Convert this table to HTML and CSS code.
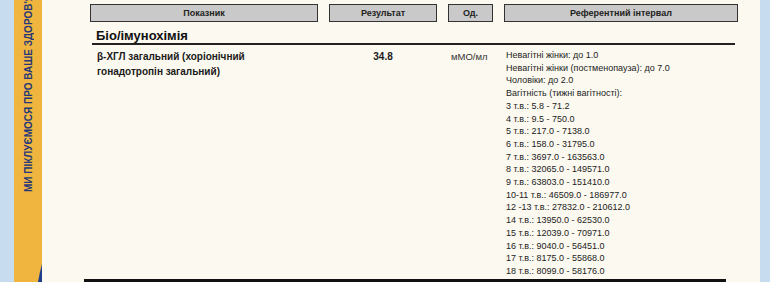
FILE: index.html
```html
<!DOCTYPE html>
<html lang="uk">
<head>
<meta charset="utf-8">
<title>Результати аналізів</title>
<link rel="stylesheet" href="styles.css">
</head>
<body>
<div class="page">
  <div class="edge-left"></div>
  <div class="brand-strip">
    <div class="slogan">МИ ПІКЛУЄМОСЯ ПРО ВАШЕ ЗДОРОВ'Я</div>
    <svg class="swoosh" width="28" height="24" viewBox="0 0 28 24"><path d="M28 6 Q 25.5 15 24 24 L28 24 Z" fill="#1e3d8c"/></svg>
  </div>
  <main class="sheet">
    <div class="grid head">
      <div class="hcell">Показник</div>
      <div class="hcell">Результат</div>
      <div class="hcell">Од.</div>
      <div class="hcell">Референтний інтервал</div>
    </div>
    <div class="section">Біо/імунохімія</div>
    <div class="grid row">
      <div class="name">β-ХГЛ загальний (хоріонічний гонадотропін загальний)</div>
      <div class="result">34.8</div>
      <div class="unit">мМО/мл</div>
      <div class="ref">
        <div>Невагітні жінки: до 1.0</div>
        <div>Невагітні жінки (постменопауза): до 7.0</div>
        <div>Чоловіки: до 2.0</div>
        <div>Вагітність (тижні вагітності):</div>
        <div>3 т.в.: 5.8 - 71.2</div>
        <div>4 т.в.: 9.5 - 750.0</div>
        <div>5 т.в.: 217.0 - 7138.0</div>
        <div>6 т.в.: 158.0 - 31795.0</div>
        <div>7 т.в.: 3697.0 - 163563.0</div>
        <div>8 т.в.: 32065.0 - 149571.0</div>
        <div>9 т.в.: 63803.0 - 151410.0</div>
        <div>10-11 т.в.: 46509.0 - 186977.0</div>
        <div>12 -13 т.в.: 27832.0 - 210612.0</div>
        <div>14 т.в.: 13950.0 - 62530.0</div>
        <div>15 т.в.: 12039.0 - 70971.0</div>
        <div>16 т.в.: 9040.0 - 56451.0</div>
        <div>17 т.в.: 8175.0 - 55868.0</div>
        <div>18 т.в.: 8099.0 - 58176.0</div>
      </div>
    </div>
    <div class="footer-bar"></div>
  </main>
  <div class="edge-right"></div>
</div>
</body>
</html>
```
FILE: styles.css
```css
html, body {
  margin: 0;
  padding: 0;
  height: 282px;
  overflow: hidden;
}
body {
  font-family: "Liberation Sans", Arial, sans-serif;
  color: #1a1a1a;
}
.page {
  display: flex;
  height: 282px;
  overflow: hidden;
}
.edge-left {
  width: 14px;
  flex: none;
  background: #c8dcf0;
}
.edge-right {
  width: 10px;
  flex: none;
  background: #c8dcf0;
}
.brand-strip {
  position: relative;
  width: 28px;
  flex: none;
  background: #f0b53e;
  display: flex;
  flex-direction: column;
  justify-content: flex-end;
  align-items: center;
  padding-bottom: 90px;
  box-sizing: border-box;
  overflow: hidden;
}
.slogan {
  writing-mode: vertical-rl;
  transform: rotate(180deg);
  font-weight: bold;
  font-size: 10px;
  line-height: 12px;
  color: #26377a;
  white-space: nowrap;
  margin-left: 2px;
}
.swoosh {
  position: absolute;
  right: 0;
  bottom: 0;
}
.sheet {
  flex: 1;
  background: #fcf9f0;
  padding: 4px 0 0 48px;
  overflow: hidden;
}
.grid {
  display: grid;
  grid-template-columns: 228px 108px 45px 234px;
  column-gap: 11px;
}
.hcell {
  height: 18px;
  box-sizing: border-box;
  border: 1px solid #333;
  background: #c9c9c9;
  font-weight: bold;
  font-size: 9px;
  line-height: 16px;
  text-align: center;
  color: #222;
}
.section {
  margin: 6px 0 0 2px;
  width: 643px;
  padding-left: 4px;
  box-sizing: border-box;
  font-weight: bold;
  font-size: 13px;
  line-height: 15px;
  color: #111;
  border-bottom: 2px solid #222;
}
.row {
  margin-top: 4px;
}
.name {
  padding-left: 7px;
  font-weight: bold;
  font-size: 10px;
  line-height: 15px;
  padding-right: 60px;
}
.result {
  text-align: center;
  font-weight: bold;
  font-size: 10px;
  line-height: 15px;
}
.unit {
  padding-left: 3px;
  font-size: 9.5px;
  line-height: 15px;
  color: #333;
}
.ref {
  padding-left: 2px;
  font-size: 9px;
  line-height: 12.7px;
  color: #222;
}
.footer-bar {
  margin: 1px 0 0 -6px;
  width: 642px;
  height: 20px;
  background: #111;
}
```
